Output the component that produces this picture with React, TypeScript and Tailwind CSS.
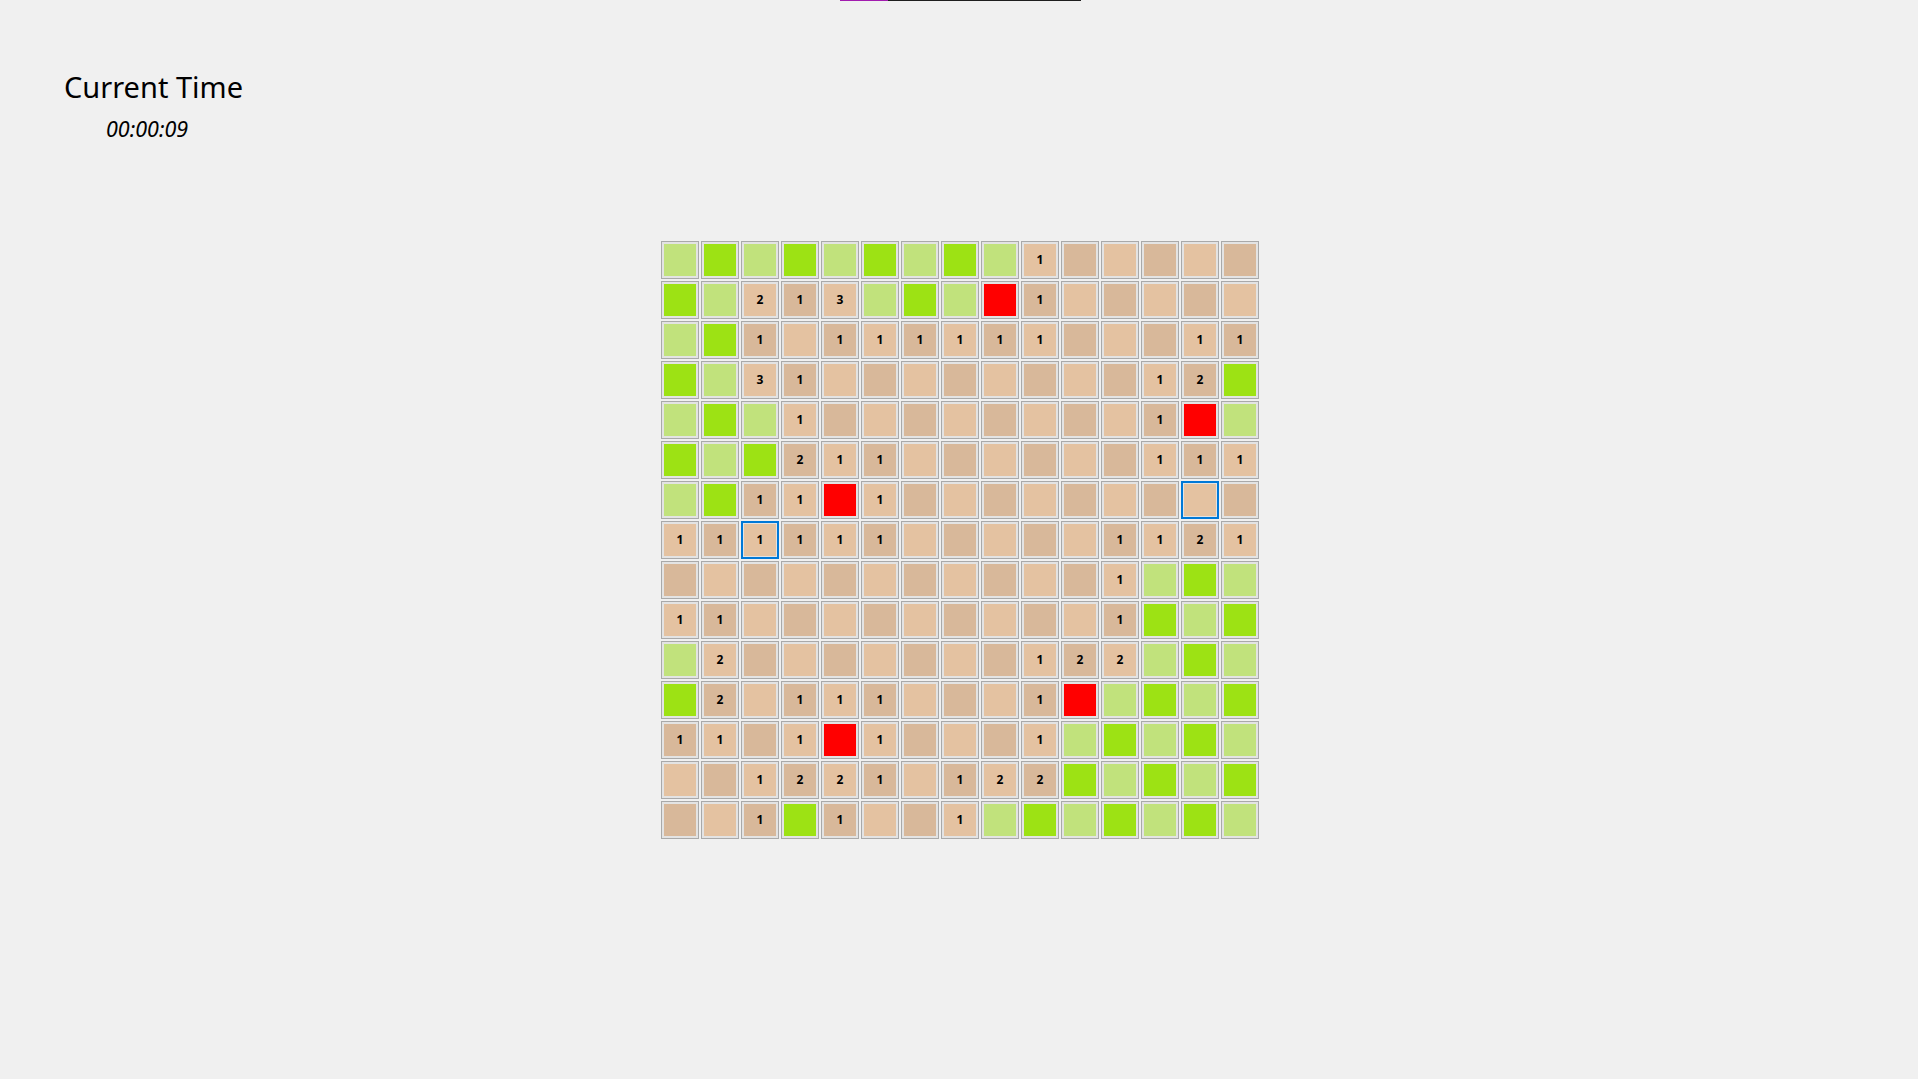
import React from "react";

// board rows: G = covered, R = mine, . = open empty, digit = open with count
const BOARD = [
  "GGGGGGGGG1.....",
  "GG213GGGR1.....",
  "GG1.111111...11",
  "GG31........12G",
  "GGG1........1RG",
  "GGG211......111",
  "GG11R1.........",
  "111111.....1121",
  "...........1GGG",
  "11.........1GGG",
  "G2.......122GGG",
  "G2.111...1RGGGG",
  "11.1R1...1GGGGG",
  "..1221.122GGGGG",
  "..1G1..1GGGGGGG",
];

const SELECTED = new Set(["7-2", "6-13"]);

function cellFill(ch: string, r: number, c: number) {
  const even = (r + c) % 2 === 0;
  if (ch === "G") return even ? "bg-[#c1e27c]" : "bg-[#9de214]";
  if (ch === "R") return "bg-[#ff0000]";
  return even ? "bg-[#d8b89a]" : "bg-[#e4c2a1]";
}

function Cell({ ch, r, c }: { ch: string; r: number; c: number }) {
  const selected = SELECTED.has(`${r}-${c}`);
  return (
    <div
      className={`w-[38px] h-[38px] bg-[#e3e3e3] ${
        selected ? "border-2 border-[#0078d7] p-px" : "border border-[#a9a9a9] p-[2px]"
      }`}
    >
      <div
        className={`w-full h-full flex items-center justify-center text-[12px] font-bold text-black ${cellFill(
          ch,
          r,
          c
        )}`}
      >
        {/[1-8]/.test(ch) ? ch : null}
      </div>
    </div>
  );
}

export default function App() {
  return (
    <div
      className="min-h-screen w-full bg-[#f0f0f0] text-black"
      style={{ fontFamily: '"Noto Sans", "Liberation Sans", sans-serif' }}
    >
      <div className="flex h-px w-[241px] ml-[840px] bg-[#1e1e1e]">
        <div className="w-[48px] h-full bg-[#a21caf]" />
      </div>

      <div className="pl-[64px] pt-[68px]">
        <h1 className="text-[29px] leading-[36px] font-normal">Current Time</h1>
        <div className="pl-[42px] mt-[11px] text-[21.5px] leading-[26px] italic">00:00:09</div>
      </div>

      <div className="flex justify-center pt-[99px] pl-[2px]">
        <div className="grid grid-cols-[repeat(15,38px)] gap-[2px]">
          {BOARD.map((row, r) =>
            row.split("").map((ch, c) => <Cell key={`${r}-${c}`} ch={ch} r={r} c={c} />)
          )}
        </div>
      </div>
    </div>
  );
}
